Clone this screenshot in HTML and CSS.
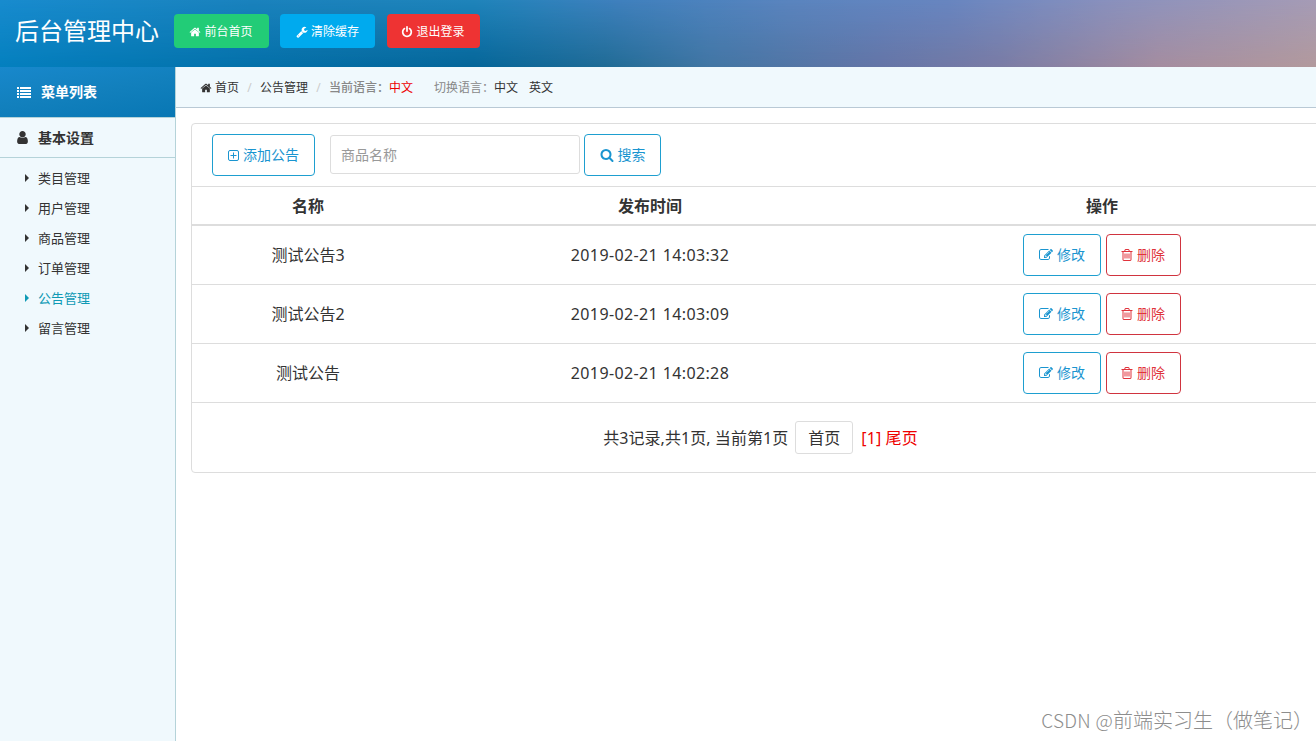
FILE: index.html
```html
<!DOCTYPE html>
<html lang="zh-CN">
<head>
<meta charset="utf-8">
<title>后台管理中心</title>
<link rel="stylesheet" href="styles.css">
</head>
<body>
<svg class="sprite" aria-hidden="true">
  <symbol id="home" viewBox="0 0 1792 1792"><path d="M1472 992v480q0 26-19 45t-45 19h-384v-384h-256v384h-384q-26 0-45-19t-19-45v-480q0-1 .5-3t.5-3l575-474 575 474q1 2 1 6zm223-69l-62 74q-8 9-21 11h-3q-13 0-21-7l-692-577-692 577q-12 8-24 7-13-2-21-11l-62-74q-8-10-7-23.5t11-21.5l719-599q32-26 76-26t76 26l244 204v-195q0-14 9-23t23-9h192q14 0 23 9t9 23v408l219 182q10 8 11 21.5t-7 23.5z"/></symbol>
  <symbol id="wrench" viewBox="0 0 1792 1792"><path d="M448 1472q0-26-19-45t-45-19-45 19-19 45 19 45 45 19 45-19 19-45zm644-420l-682 682q-37 37-90 37-52 0-91-37l-106-108q-38-36-38-90 0-53 38-91l681-681q39 98 114.5 173.5t173.5 114.5zm634-435q0 39-23 106-47 134-164.5 217.5t-258.5 83.5q-185 0-316.5-131.5t-131.5-316.5 131.5-316.5 316.5-131.5q58 0 121.5 16.5t107.5 46.5q16 11 16 28t-16 28l-293 169v224l193 107q5-3 79-48.5t135.5-81 70.5-35.5q15 0 23.5 10t8.5 25z"/></symbol>
  <symbol id="power" viewBox="0 0 1792 1792"><path d="M1664 896q0 156-61 298t-164 245-245 164-298 61-298-61-245-164-164-245-61-298q0-182 80.5-343t226.5-270q43-32 95.5-25t83.5 50q32 42 24.5 94.5t-49.5 84.5q-98 74-151.5 181t-53.5 228q0 104 40.5 198.5t109.5 163.5 163.5 109.5 198.5 40.5 198.5-40.5 163.5-109.5 109.5-163.5 40.5-198.5q0-121-53.5-228t-151.5-181q-42-32-49.5-84.5t24.5-94.5q31-43 84-50t95 25q146 109 226.5 270t80.5 343zm-640-768v640q0 52-38 90t-90 38-90-38-38-90v-640q0-52 38-90t90-38 90 38 38 90z"/></symbol>
  <symbol id="list" viewBox="0 0 14 14"><path d="M0 2h2v2H0zM3 2h11v2H3zM0 5h2v2H0zM3 5h11v2H3zM0 8h2v2H0zM3 8h11v2H3zM0 11h2v2H0zM3 11h11v2H3z"/></symbol>
  <symbol id="user" viewBox="0 0 1792 1792"><path d="M1536 1399q0 109-62.5 187t-150.5 78h-854q-88 0-150.5-78t-62.5-187q0-85 8.5-160.5t31.5-152 58.5-131 94-89 134.5-34.5q131 128 313 128t313-128q76 0 134.5 34.5t94 89 58.5 131 31.5 152 8.5 160.5zm-256-887q0 159-112.5 271.5t-271.5 112.5-271.5-112.5-112.5-271.5 112.5-271.5 271.5-112.5 271.5 112.5 112.5 271.5z"/></symbol>
  <symbol id="search" viewBox="0 0 1792 1792"><path d="M1216 832q0-185-131.5-316.5t-316.5-131.5-316.5 131.5-131.5 316.5 131.5 316.5 316.5 131.5 316.5-131.5 131.5-316.5zm512 832q0 52-38 90t-90 38q-54 0-90-38l-343-342q-179 124-399 124-143 0-273.5-55.5t-225-150-150-225-55.5-273.5 55.5-273.5 150-225 225-150 273.5-55.5 273.5 55.5 225 150 150 225 55.5 273.5q0 220-124 399l343 343q37 37 37 90z"/></symbol>
  <symbol id="edit" viewBox="0 0 1792 1792"><path d="M888 1184l116-116-152-152-116 116v56h96v96h56zm440-720q-16-16-33 1l-350 350q-17 17-1 33t33-1l350-350q17-17 1-33zm80 594v190q0 119-84.5 203.5t-203.5 84.5h-832q-119 0-203.5-84.5t-84.5-203.5v-832q0-119 84.5-203.5t203.5-84.5h832q63 0 117 25 15 7 18 23 3 17-9 29l-49 49q-14 14-32 8-23-6-45-6h-832q-66 0-113 47t-47 113v832q0 66 47 113t113 47h832q66 0 113-47t47-113v-126q0-13 9-22l64-64q15-15 35-7t20 29zm-96-738l288 288-672 672h-288v-288zm444 132l-92 92-288-288 92-92q28-28 68-28t68 28l152 152q28 28 28 68t-28 68z"/></symbol>
  <symbol id="trash" viewBox="0 0 1792 1792"><path d="M704 736v576q0 14-9 23t-23 9h-64q-14 0-23-9t-9-23v-576q0-14 9-23t23-9h64q14 0 23 9t9 23zm256 0v576q0 14-9 23t-23 9h-64q-14 0-23-9t-9-23v-576q0-14 9-23t23-9h64q14 0 23 9t9 23zm256 0v576q0 14-9 23t-23 9h-64q-14 0-23-9t-9-23v-576q0-14 9-23t23-9h64q14 0 23 9t9 23zm128 724v-948h-896v948q0 22 7 40.5t14.5 27 10.5 8.5h832q3 0 10.5-8.5t14.5-27 7-40.5zm-672-1076h448l-48-117q-7-9-17-11h-317q-10 2-17 11zm928 32v64q0 14-9 23t-23 9h-96v948q0 83-47 143.5t-113 60.5h-832q-66 0-113-58.5t-47-141.5v-952h-96q-14 0-23-9t-9-23v-64q0-14 9-23t23-9h309l70-167q15-37 54-63t79-26h320q40 0 79 26t54 63l70 167h309q14 0 23 9t9 23z"/></symbol>
  <symbol id="plus" viewBox="0 0 11 11"><path d="M2 .5h7A1.5 1.5 0 0 1 10.500 2v7A1.500 1.500 0 0 1 9 10.500H2A1.500 1.500 0 0 1 .5 9V2A1.500 1.500 0 0 1 2 .5zM5.500 2.500v6M2.500 5.500h6" fill="none" stroke="currentColor"/></symbol>
</svg>
<header class="header">
  <h1 class="logo">后台管理中心</h1>
  <a class="top-btn green"><svg class="icon"><use href="#home"/></svg>前台首页</a>
  <a class="top-btn blue"><svg class="icon"><use href="#wrench"/></svg>清除缓存</a>
  <a class="top-btn red"><svg class="icon"><use href="#power"/></svg>退出登录</a>
</header>
<div class="body">
  <aside class="sidebar">
    <div class="menu-title"><svg class="icon"><use href="#list"/></svg>菜单列表</div>
    <h2 class="group"><svg class="icon"><use href="#user"/></svg>基本设置</h2>
    <ul class="menu">
      <li>类目管理</li>
      <li>用户管理</li>
      <li>商品管理</li>
      <li>订单管理</li>
      <li class="active">公告管理</li>
      <li>留言管理</li>
    </ul>
  </aside>
  <main class="main">
    <nav class="crumbs">
      <svg class="icon"><use href="#home"/></svg><span>首页</span><i class="slash">/</i><span>公告管理</span><i class="slash">/</i><b class="muted">当前语言：</b><span class="hot">中文</span><span class="muted switch">切换语言：</span><span>中文</span><span class="english">英文</span>
    </nav>
    <section class="panel">
      <div class="toolbar">
        <a class="btn add"><svg class="icon"><use href="#plus"/></svg>添加公告</a>
        <input class="field" type="text" placeholder="商品名称">
        <a class="btn find"><svg class="icon"><use href="#search"/></svg>搜索</a>
      </div>
      <div class="row head"><span>名称</span><span>发布时间</span><span>操作</span></div>
      <div class="row"><span>测试公告3</span><span class="time">2019-02-21 14:03:32</span><span class="ops"><a class="btn edit"><svg class="icon"><use href="#edit"/></svg>修改</a><a class="btn del"><svg class="icon"><use href="#trash"/></svg>删除</a></span></div>
      <div class="row"><span>测试公告2</span><span class="time">2019-02-21 14:03:09</span><span class="ops"><a class="btn edit"><svg class="icon"><use href="#edit"/></svg>修改</a><a class="btn del"><svg class="icon"><use href="#trash"/></svg>删除</a></span></div>
      <div class="row"><span>测试公告</span><span class="time">2019-02-21 14:02:28</span><span class="ops"><a class="btn edit"><svg class="icon"><use href="#edit"/></svg>修改</a><a class="btn del"><svg class="icon"><use href="#trash"/></svg>删除</a></span></div>
      <div class="pager"><span class="summary">共3记录,共1页, 当前第1页</span><a class="first">首页</a><span class="pages">[1] 尾页</span></div>
    </section>
  </main>
</div>
<div class="watermark"><span class="latin">CSDN @</span>前端实习生（做笔记）</div>
</body>
</html>
```

FILE: styles.css
```css
* { box-sizing: border-box; }
body {
  margin: 0;
  height: 741px;
  overflow: hidden;
  position: relative;
  color: #333;
  background: #fff;
  font: 16px/24px "Noto Sans", "Noto Sans CJK SC", sans-serif;
}
.sprite { position: absolute; width: 0; height: 0; }
.icon { display: block; flex: none; width: 12px; height: 12px; fill: currentColor; }

.header {
  display: flex;
  position: relative;
  isolation: isolate;
  height: 67px;
  padding: 14px 0 0 15px;
  color: #fff;
  background: linear-gradient(90deg, #0480bf 0, #0471aa 19%, #05669a 36%, #206c96 46%, #4276a4 54%, #6575a7 67%, #7a7ca5 76%, #a58da0 88%, #b39a9d 100%);
}
/* Lighter upper edge fading into the base gradient */
.header::before {
  content: "";
  position: absolute;
  inset: 0;
  z-index: -1;
  background: linear-gradient(90deg, #188bce 0, #1a82bd 19%, #1f84ba 36%, #3f80bd 47%, #5a84be 60%, #6785c0 72%, #8890bd 84%, #a59bb5 100%);
  -webkit-mask-image: linear-gradient(#000, transparent);
  mask-image: linear-gradient(#000, transparent);
}
.logo { width: 159px; margin: 0; font-size: 24px; line-height: 33px; font-weight: 400; }
.top-btn {
  display: flex;
  align-items: center;
  justify-content: center;
  gap: 3px;
  width: 95px;
  height: 34px;
  margin-right: 11px;
  padding-top: 1px;
  border-radius: 4px;
  font-size: 12px;
}
.green { background: #22cc77; padding-right: 1px; }
.blue { background: #00aaee; }
.red { background: #ee3333; width: 93px; margin-left: 1px; padding-right: 1px; }

.body { display: flex; height: 674px; }
.sidebar { flex: none; width: 176px; border-right: 1px solid #b5d3d9; background: #f0f9fd; }
.menu-title {
  display: flex;
  align-items: center;
  height: 51px;
  padding: 0 0 1px 17px;
  gap: 10px;
  color: #fff;
  font-size: 14px;
  font-weight: 700;
  border-bottom: 1px solid #b5d3d9;
  background: linear-gradient(170deg, #1888cc, #1280bd 50%, #0877b4);
}
.menu-title .icon { width: 14px; height: 14px; }
.group {
  display: flex;
  align-items: center;
  gap: 8px;
  height: 40px;
  margin: 0;
  padding-left: 15px;
  font-size: 14px;
  border-bottom: 1px solid #b5d3d9;
}
.group .icon { width: 15px; height: 15px; }
.menu { margin: 0; padding: 5px 0 0 25px; list-style: none; font-size: 13px; line-height: 28px; }
.menu li { display: flex; align-items: center; gap: 9px; height: 30px; padding-bottom: 1px; }
.menu li::before { content: ""; border: solid transparent; border-width: 4px 0 4px 4px; border-left-color: currentColor; }
.menu .active { color: #0f9ab5; }

.main { flex: 1; min-width: 0; overflow: hidden; }
.crumbs {
  display: flex;
  align-items: center;
  height: 41px;
  padding: 2px 0 0 24px;
  font-size: 12px;
  white-space: nowrap;
  background: #f0f9fd;
  border-bottom: 1px solid #b9c9d5;
}
.crumbs .icon { margin-right: 3px; }
.slash { width: 21px; text-align: center; color: #ccc; font-style: normal; }
.muted { color: #888; font-weight: 400; }
b.muted { font-weight: 500; }
.hot { color: #e00; }
.switch { margin-left: 21px; }
.english { margin-left: 11px; }

.panel { width: 1138px; margin: 15px 0 0 15px; border: 1px solid #ddd; border-radius: 4px; }
.toolbar { display: flex; height: 62px; padding: 10px 20px; }
.btn {
  display: flex;
  align-items: center;
  justify-content: center;
  gap: 4px;
  height: 42px;
  border: 1px solid #1e9fd0;
  border-radius: 4px;
  color: #1a95d0;
  font-size: 14px;
}
.btn .icon { width: 14px; height: 14px; }
.add { width: 103px; }
.add .icon { width: 11px; height: 11px; }
.find { width: 77px; }
.field {
  width: 250px;
  height: 39px;
  margin: 1px 4px 0 15px;
  padding: 0 10px;
  border: 1px solid #ddd;
  border-radius: 3px;
  font: inherit;
  font-size: 14px;
}
.field::placeholder { color: #999; opacity: 1; }
.row {
  display: grid;
  grid-template-columns: 232px 452px 452px;
  align-items: center;
  justify-items: center;
  height: 59px;
  border-top: 1px solid #ddd;
}
.head { height: 38px; font-weight: 700; }
.head + .row { height: 60px; border-top-width: 2px; }
.time { letter-spacing: .38px; }
.ops { display: flex; gap: 5px; }
.edit { width: 78px; }
.del { width: 75px; padding-right: 2px; border-color: #d0343f; color: #e0333c; gap: 3px; }
.pager { display: flex; justify-content: center; align-items: center; height: 70px; padding-left: 1px; border-top: 1px solid #ddd; }
.summary { letter-spacing: .06px; }
.first { width: 58px; height: 33px; margin: 0 8px 0 7px; border: 1px solid #ddd; border-radius: 3px; text-align: center; line-height: 32px; }
.pages { color: #e00; letter-spacing: .1px; }
.watermark {
  position: absolute;
  right: 3px;
  bottom: 6px;
  color: #8d8d8d;
  font: 300 20px/30px "Noto Sans CJK SC", sans-serif;
  white-space: nowrap;
}
.latin { font-size: 19px; letter-spacing: .25px; }
```
